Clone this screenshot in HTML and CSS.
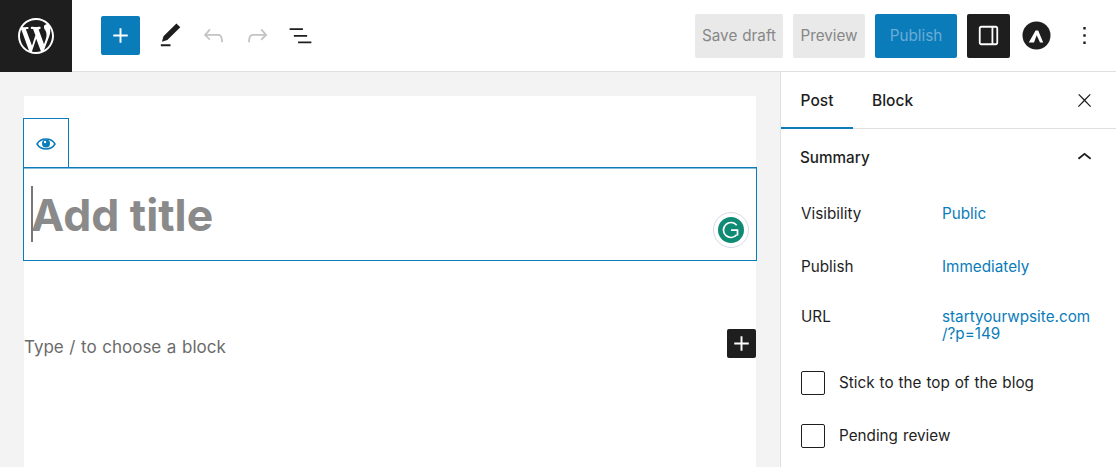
FILE: index.html
```html
<!DOCTYPE html>
<html lang="en">
<head>
<meta charset="utf-8">
<title>Add title</title>
<link rel="stylesheet" href="styles.css">
</head>
<body>
<div class="app">
  <header class="topbar">
    <div class="tools">
      <div class="logo"><svg width="36" height="36" viewBox="0 0 20 20" fill="#fff"><path d="M20 10c0-5.51-4.49-10-10-10C4.48 0 0 4.49 0 10c0 5.52 4.48 10 10 10 5.51 0 10-4.48 10-10zM7.78 15.37L4.37 6.22c.55-.02 1.17-.08 1.17-.08.5-.06.44-1.13-.06-1.11 0 0-1.45.11-2.37.11-.18 0-.37 0-.58-.01C4.12 2.69 6.87 1.11 10 1.11c2.33 0 4.45.87 6.05 2.34-.68-.11-1.65.39-1.65 1.58 0 .74.45 1.36.9 2.1.35.61.55 1.36.55 2.46 0 1.49-1.4 5-1.4 5l-3.03-8.37c.54-.02.82-.17.82-.17.5-.05.44-1.25-.06-1.22 0 0-1.44.12-2.37.12-.85 0-2.29-.12-2.29-.12-.5-.03-.56 1.2-.06 1.22l.92.08 1.26 3.41zM17.41 10c.24-.64.74-1.87.43-4.25.7 1.29 1.05 2.71 1.05 4.25 0 3.29-1.73 6.24-4.4 7.78.97-2.59 1.94-5.2 2.92-7.78zM6.1 18.09C3.12 16.65 1.11 13.53 1.11 10c0-1.3.23-2.48.72-3.59C3.25 10.3 4.67 14.2 6.1 18.09zm4.03-6.63l2.58 6.98c-.86.29-1.76.45-2.71.45-.79 0-1.57-.11-2.29-.33.81-2.38 1.62-4.74 2.42-7.1z"/></svg></div>
      <div class="add"><svg width="29" height="29" viewBox="0 0 24 24" fill="#fff"><path d="M18 11.2h-5.2V6h-1.6v5.2H6v1.6h5.2V18h1.6v-5.2H18z"/></svg></div>
      <div class="tool"><svg width="29" height="29" viewBox="0 0 24 24" fill="#1e1e1e"><path d="M20.1 5.1L16.9 2 6.2 12.7l-1.3 4.4 4.5-1.3L20.1 5.1zM4 20.8h8v-1.5H4v1.5z"/></svg></div>
      <div class="tool"><svg width="29" height="29" viewBox="0 0 24 24" fill="#c4c4c4"><path d="M18.3 11.7c-.6-.6-1.4-.9-2.3-.9H6.7l2.9-3.3-1.1-1-4.5 5L8.5 16l1-1-2.7-2.7H16c.5 0 .9.2 1.3.5 1 1 1 3.4 1 4.5v.3h1.5v-.2c0-1.5 0-4.3-1.5-5.7z"/></svg></div>
      <div class="tool"><svg width="29" height="29" viewBox="0 0 24 24" fill="#c4c4c4"><path d="M15.6 6.5l-1.1 1 2.9 3.3H8c-.9 0-1.7.3-2.3.9-1.4 1.5-1.4 4.2-1.4 5.7v.2h1.5v-.3c0-1.1 0-3.5 1-4.5.3-.3.7-.5 1.3-.5h9.2L14.5 15l1.1 1.1 4.6-4.6-4.6-5z"/></svg></div>
      <div class="tool"><svg width="29" height="29" viewBox="0 0 24 24" fill="#1e1e1e"><path d="M3 6h11v1.5H3V6zm3.5 5.5h11V13h-11v-1.5zM21 17H10v1.5h11V17z"/></svg></div>
    </div>
    <div class="actions">
      <div class="btn btn-draft">Save draft</div>
      <div class="btn btn-preview">Preview</div>
      <div class="btn btn-publish">Publish</div>
      <div class="btn-panel"><svg width="29" height="29" viewBox="0 0 24 24" fill="#fff"><path d="M18 4H6c-1.1 0-2 .9-2 2v12c0 1.1.9 2 2 2h12c1.1 0 2-.9 2-2V6c0-1.1-.9-2-2-2zm-3.5 14.5H6c-.3 0-.5-.2-.5-.5V6c0-.3.2-.5.5-.5h8.5v13zm4-.5c0 .3-.2.5-.5.5h-2v-13h2c.3 0 .5.2.5.5v12z"/></svg></div>
      <div class="astra"><svg width="29" height="29" viewBox="0 0 29 29"><circle cx="14.5" cy="14.5" r="14" fill="#1e1e1e"/><path d="M13.6 9.500h2.600l5 12h-3.200l-3.300-7.200-2.700 7.200H6.800z" fill="#fff"/></svg></div>
      <div class="more"><svg width="29" height="29" viewBox="0 0 24 24" fill="#1e1e1e"><path d="M13 19h-2v-2h2v2zm0-6h-2v-2h2v2zm0-6h-2V5h2v2z"/></svg></div>
    </div>
  </header>
  <div class="body">
    <main class="canvas">
      <div class="sheet">
        <div class="eye-tab"><svg width="20" height="14" viewBox="0 0 20 14"><path d="M1 7c2-3.400 5-5 9-5s7 1.600 9 5c-2 3.400-5 5-9 5S3 10.400 1 7z" fill="none" stroke="#0a7cba" stroke-width="1.500"/><circle cx="10" cy="6.500" r="4" fill="#0a7cba"/><circle cx="9" cy="5" r="1.200" fill="#fff"/></svg></div>
        <div class="title-box">
          <span class="caret"></span>
          <h1 class="title">Add title</h1>
          <div class="grammarly"><svg width="36" height="36" viewBox="0 0 36 36"><circle cx="18" cy="18" r="17.500" fill="#fff" stroke="#d5d8e5"/><circle cx="18" cy="18" r="13" fill="#0f8a74"/><path d="M23.700 13.200A7.500 7.500 0 1 0 23.700 22.800" fill="none" stroke="#fff" stroke-width="1.700"/><path d="M18 18.200h6.500v5.300" fill="none" stroke="#fff" stroke-width="1.700"/></svg></div>
        </div>
        <div class="block-row">
          <p class="prompt">Type / to choose a block</p>
          <div class="block-add"><svg width="29" height="29" viewBox="0 0 24 24" fill="#fff"><path d="M18 11.200h-5.200V6h-1.600v5.200H6v1.600h5.200V18h1.600v-5.200H18z"/></svg></div>
        </div>
      </div>
    </main>
    <aside class="sidebar">
      <div class="tabs">
        <div class="tab tab-active">Post</div>
        <div class="tab tab-block">Block</div>
        <div class="close"><svg width="21" height="21" viewBox="0 0 24 24" fill="#1e1e1e"><path d="M13 11.800l6.100-6.300-1-1-6.100 6.200-6.100-6.200-1 1 6.100 6.300-6.500 6.700 1 1 6.500-6.600 6.500 6.600 1-1z"/></svg></div>
      </div>
      <div class="panel-head">
        <span class="panel-title">Summary</span>
        <svg width="29" height="29" viewBox="0 0 24 24" fill="#1e1e1e"><path d="M6.500 12.400L12 8l5.500 4.400-.9 1.200L12 10l-4.500 3.600-1-1.200z"/></svg>
      </div>
      <div class="row"><span class="label">Visibility</span><span class="value">Public</span></div>
      <div class="row"><span class="label">Publish</span><span class="value">Immediately</span></div>
      <div class="row row-url"><span class="label">URL</span><span class="value">startyourwpsite.com<br>/?p=149</span></div>
      <div class="row"><span class="check"></span><span class="check-label">Stick to the top of the blog</span></div>
      <div class="row"><span class="check"></span><span class="check-label">Pending review</span></div>
    </aside>
  </div>
</div>
</body>
</html>
```
FILE: styles.css
```css
* { box-sizing: border-box; }
html, body { margin: 0; height: 100%; overflow: hidden; }
body { font-family: Inter, "Liberation Sans", sans-serif; color: #1e1e1e; background: #fff; }
.app { width: 1116px; height: 467px; display: flex; flex-direction: column; overflow: hidden; }

.topbar { height: 72px; flex: none; display: flex; justify-content: space-between; align-items: center; border-bottom: 1px solid #e0e0e0; }
.tools { display: flex; align-items: center; height: 72px; }
.logo { width: 72px; height: 72px; background: #1e1e1e; display: flex; align-items: center; justify-content: center; }
.add { width: 39px; height: 39px; margin-left: 29px; margin-right: 8.500px; background: #0a7cba; border-radius: 2px; display: flex; align-items: center; justify-content: center; }
.tool { width: 43.500px; height: 44px; display: flex; align-items: center; justify-content: center; }
.tools svg { display: block; }

.actions { display: flex; align-items: center; height: 71px; }
.btn { height: 44px; display: flex; align-items: center; justify-content: center; font-size: 15.250px; word-spacing: .7px; border-radius: 2px; }
.btn-draft { width: 88px; background: #e9e9e9; color: #878787; margin-right: 10px; }
.btn-preview { width: 72px; background: #e9e9e9; color: #878787; margin-right: 10px; }
.btn-publish { width: 82px; background: #0a7cba; color: #6cacd6; margin-right: 10px; }
.btn-panel { width: 43px; height: 44px; background: #1e1e1e; border-radius: 2px; display: flex; align-items: center; justify-content: center; }
.astra { width: 29px; height: 29px; margin-left: 12px; }
.more { width: 29px; height: 29px; margin-left: 19px; margin-right: 17px; }
.actions svg { display: block; }

.body { flex: 1; display: flex; min-height: 0; }
.canvas { width: 781px; background: #f3f3f3; border-right: 1px solid #e0e0e0; padding: 24px 24px 0; }
.sheet { background: #fff; height: 100%; padding-top: 22px; }
.eye-tab { width: 46px; height: 50px; margin-left: -1px; border: 1px solid #0a7cba; border-bottom: 0; display: flex; align-items: center; justify-content: center; }
.title-box { position: relative; height: 94px; margin: -1px -1px 0; border: 1px solid #0a7cba; box-shadow: inset 0 1px 0 rgba(10, 124, 186, .5); }
.title { margin: 0; padding-left: 7px; font-size: 44.500px; line-height: 94px; height: 92px; font-weight: 700; color: #8a8a8a; }
.caret { position: absolute; left: 7px; top: 18px; width: 2px; height: 56px; background: #777; }
.grammarly { position: absolute; right: 7px; top: 44px; width: 36px; height: 36px; }
.grammarly svg { display: block; }
.block-row { display: flex; align-items: center; justify-content: space-between; margin-top: 68px; height: 29px; }
.prompt { margin: 0; padding-top: 6px; font-size: 17px; word-spacing: .8px; color: #6b6b6b; }
.block-add { width: 29px; height: 29px; background: #1e1e1e; border-radius: 2px; display: flex; align-items: center; justify-content: center; }

.sidebar { flex: 1; min-width: 0; font-size: 15.250px; word-spacing: .7px; }
.tabs { height: 57px; display: flex; align-items: center; border-bottom: 1px solid #e0e0e0; position: relative; }
.tab { height: 57px; display: flex; align-items: center; font-size: 15.500px; font-weight: 500; }
.tab-active { width: 72px; justify-content: center; box-shadow: inset 0 -2px 0 #0a7cba; margin-bottom: -1px; }
.tab-block { margin-left: 19px; }
.close { margin-left: auto; margin-right: 21px; height: 21px; }
.close svg, .panel-head svg { display: block; }
.panel-head { height: 58px; display: flex; align-items: center; justify-content: space-between; padding: 0 17px 2px 19px; }
.panel-title { font-size: 15.250px; font-weight: 500; }
.row { height: 53px; display: flex; align-items: center; padding-left: 20px; line-height: 17px; }
.row-url { height: 63px; align-items: flex-start; padding-top: 14.500px; }
.label { width: 141px; flex: none; }
.value { color: #0a7cba; }
.check { width: 24px; height: 24px; flex: none; border: 1px solid #1e1e1e; border-radius: 2px; margin-right: 14px; }
```
